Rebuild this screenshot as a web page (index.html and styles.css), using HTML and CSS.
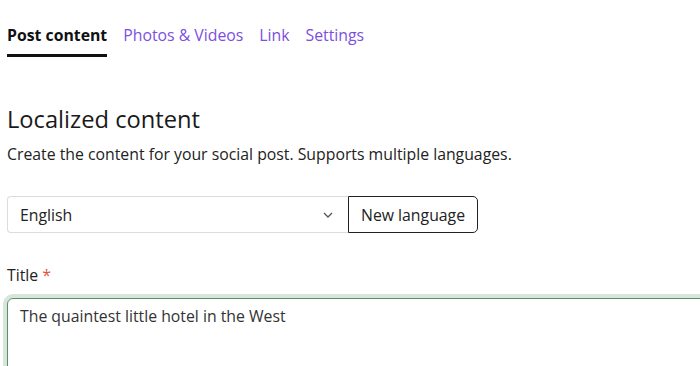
FILE: index.html
```html
<!DOCTYPE html>
<html>
<head>
<meta charset="utf-8">
<link rel="stylesheet" href="styles.css">
</head>
<body>
<div class="page">
  <nav class="tabs">
    <a class="tab active">Post content</a>
    <a class="tab">Photos &amp; Videos</a>
    <a class="tab">Link</a>
    <a class="tab">Settings</a>
  </nav>
  <section class="section">
    <h2 class="heading">Localized content</h2>
    <p class="desc">Create the content for your social post. Supports multiple languages.</p>
    <div class="lang-row">
      <div class="select">
        <span>English</span>
        <svg class="chev" width="10" height="6" viewBox="0 0 10 6"><path d="M1 1l4 4 4-4" fill="none" stroke="#555" stroke-width="1.3"/></svg>
      </div>
      <button class="btn">New language</button>
    </div>
    <label class="label">Title <span class="req">*</span></label>
    <div class="textarea">The quaintest little hotel in the West</div>
  </section>
</div>
</body>
</html>
```
FILE: styles.css
```css
* { box-sizing: border-box; }
html, body { margin: 0; padding: 0; background: #fff; }
body { font-family: "Open Sans", sans-serif; color: #1a1a1a; }
.page { padding: 0 0 0 7px; height: 366px; overflow: hidden; }
.tabs { display: flex; gap: 16px; padding-top: 24px; }
.tab { font-size: 15.8px; line-height: 22px; color: #7c4fe0; padding-bottom: 8px; border-bottom: 3px solid transparent; }
.tab.active { font-weight: 700; color: #111; border-bottom-color: #111; }
.section { padding-top: 47px; }
.heading { margin: 0; font-size: 23.7px; font-weight: 400; line-height: 30px; color: #1a1a1a; }
.desc { margin: 9px 0 0; font-size: 15.8px; line-height: 22px; color: #222; }
.lang-row { display: flex; margin-top: 31px; }
.select { width: 341px; height: 37px; border: 1px solid #dcdcdc; border-right: none; border-radius: 4px 0 0 4px; display: flex; align-items: center; justify-content: space-between; padding: 0 15px 0 12px; font-size: 15.8px; color: #222; }
.btn { height: 37px; padding: 0 12px; border: 1px solid #222; border-radius: 0 5px 5px 0; background: #fff; font-family: inherit; font-size: 15.8px; color: #222; }
.label { display: block; margin-top: 31px; font-size: 15.8px; line-height: 22px; color: #222; }
.req { color: #e0533d; }
.textarea { margin: 12px 0 0 0; height: 90px; width: 720px; border: 1px solid #5d8f6d; border-radius: 6px; box-shadow: 0 0 0 4px #d6e6da; padding: 6px 12px; font-size: 15.8px; line-height: 22px; color: #333; }
```
